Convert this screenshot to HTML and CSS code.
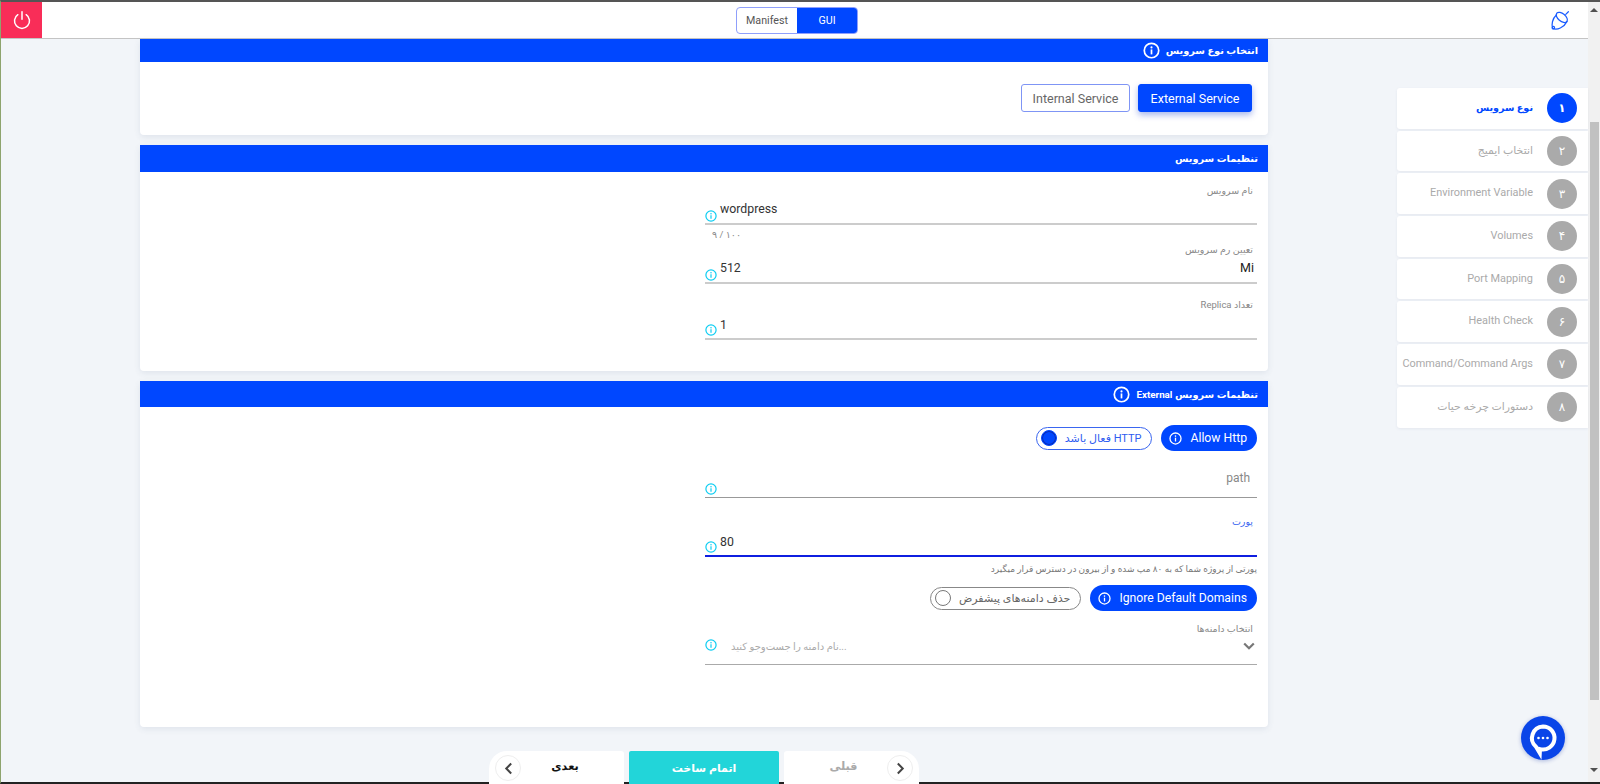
FILE: index.html
```html
<!DOCTYPE html>
<html lang="fa">
<head>
<meta charset="utf-8">
<title>Service</title>
<link rel="stylesheet" href="styles.css">
</head>
<body>
<svg class="defs" width="0" height="0" aria-hidden="true">
  <symbol id="info" viewBox="0 0 24 24">
    <circle cx="12" cy="12" r="10.2" fill="none" stroke="currentColor" stroke-width="2.4"/>
    <rect x="10.8" y="10.5" width="2.4" height="7" fill="currentColor"/>
    <circle cx="12" cy="7.6" r="1.5" fill="currentColor"/>
  </symbol>
</svg>
<div class="frame">
  <div class="page">
    <header class="topbar">
      <button class="power" aria-label="power">
        <svg viewBox="0 0 24 24" width="20" height="20"><path d="M7 5.6a9 9 0 1 0 10 0" fill="none" stroke="#fff" stroke-width="1.8" stroke-linecap="round"/><path d="M12 2v9" fill="none" stroke="#fff" stroke-width="1.8" stroke-linecap="round"/></svg>
      </button>
      <div class="switch">
        <span class="switch-item">Manifest</span>
        <span class="switch-item switch-on">GUI</span>
      </div>
      <svg class="logo" viewBox="0 0 24 24" width="21" height="21">
        <g fill="none" stroke="#1a5cff" stroke-width="1.400" stroke-linejoin="round" stroke-linecap="round">
          <ellipse cx="13.500" cy="8.500" rx="7.500" ry="4.300" transform="rotate(40 13.500 8.500)"/>
          <path d="M7.500 5.500C2.500 10 1.500 17 3 21c5 2.500 13-1 16.500-8"/>
          <path d="M18 5 21 2"/>
          <circle cx="3.800" cy="20.200" r="1.400"/>
        </g>
      </svg>
    </header>
    <div class="workspace">
      <main class="main">
        <section class="card">
          <h2 class="card-head card-head-first">انتخاب نوع سرویس <svg class="head-info"><use href="#info"/></svg></h2>
          <div class="card-body type-body">
            <button class="type-btn type-on">External Service</button>
            <button class="type-btn">Internal Service</button>
          </div>
        </section>
        <section class="card">
          <h2 class="card-head card-head-tall">تنظیمات سرویس</h2>
          <div class="card-body form-body settings-body">
            <div class="field">
              <div class="field-label">نام سرویس</div>
              <div class="field-row"><svg class="info"><use href="#info"/></svg><span class="value">wordpress</span></div>
              <div class="counter">۹ / ۱۰۰</div>
            </div>
            <div class="field field-ram">
              <div class="field-label">تعیین رم سرویس</div>
              <div class="field-row"><svg class="info"><use href="#info"/></svg><span class="value">512</span><span class="suffix">Mi</span></div>
            </div>
            <div class="field field-replica">
              <div class="field-label">تعداد Replica</div>
              <div class="field-row field-row-low"><svg class="info"><use href="#info"/></svg><span class="value">1</span></div>
            </div>
          </div>
        </section>
        <section class="card">
          <h2 class="card-head">تنظیمات سرویس External <svg class="head-info"><use href="#info"/></svg></h2>
          <div class="card-body form-body external-body">
            <div class="pill-row">
              <div class="toggle toggle-on"><span class="knob"></span><span dir="rtl">HTTP فعال باشد</span></div>
              <div class="pill"><svg class="pill-info"><use href="#info"/></svg><span>Allow Http</span></div>
            </div>
            <div class="field field-path">
              <div class="field-row field-row-dark"><svg class="info"><use href="#info"/></svg><span class="value"></span><span class="placeholder">path</span></div>
            </div>
            <div class="field field-port">
              <div class="field-label field-label-blue">پورت</div>
              <div class="field-row field-row-blue field-row-low"><svg class="info"><use href="#info"/></svg><span class="value">80</span></div>
              <div class="hint">پورتی از پروژه شما که به ۸۰ مپ شده و از بیرون در دسترس قرار میگیرد</div>
            </div>
            <div class="pill-row pill-row-second">
              <div class="toggle"><span class="knob"></span><span dir="rtl">حذف دامنه‌های پیشفرض</span></div>
              <div class="pill"><svg class="pill-info"><use href="#info"/></svg><span>Ignore Default Domains</span></div>
            </div>
            <div class="field field-domains">
              <div class="field-label">انتخاب دامنه‌ها</div>
              <div class="select-row">
                <svg class="info"><use href="#info"/></svg>
                <span class="select-placeholder" dir="rtl">...نام دامنه را جست‌وجو کنید</span>
                <svg class="chevron" viewBox="0 0 12 8" width="12" height="8"><path d="M1.200 1.500 6 6.200l4.800-4.700" fill="none" stroke="#777" stroke-width="2.200"/></svg>
              </div>
            </div>
          </div>
        </section>
        <nav class="wizard">
          <button class="wiz wiz-next"><span class="wiz-circle"><svg viewBox="0 0 10 14" width="9" height="13"><path d="M8 1.500 2.500 7 8 12.500" fill="none" stroke="#444" stroke-width="2.200"/></svg></span><span class="wiz-text">بعدی</span></button>
          <button class="wiz-finish">اتمام ساخت</button>
          <button class="wiz wiz-prev"><span class="wiz-text">قبلی</span><span class="wiz-circle"><svg viewBox="0 0 10 14" width="9" height="13"><path d="M2 1.500 7.500 7 2 12.500" fill="none" stroke="#444" stroke-width="2.200"/></svg></span></button>
        </nav>
      </main>
      <aside class="steps">
        <div class="step step-on"><span class="step-text">نوع سرویس</span><span class="step-num">۱</span></div>
        <div class="step"><span class="step-text">انتخاب ایمیج</span><span class="step-num">۲</span></div>
        <div class="step"><span class="step-text">Environment Variable</span><span class="step-num">۳</span></div>
        <div class="step"><span class="step-text">Volumes</span><span class="step-num">۴</span></div>
        <div class="step"><span class="step-text">Port Mapping</span><span class="step-num">۵</span></div>
        <div class="step"><span class="step-text">Health Check</span><span class="step-num">۶</span></div>
        <div class="step"><span class="step-text">Command/Command Args</span><span class="step-num">۷</span></div>
        <div class="step"><span class="step-text">دستورات چرخه حیات</span><span class="step-num">۸</span></div>
      </aside>
    </div>
    <button class="chat" aria-label="chat">
      <svg viewBox="0 0 44 44" width="44" height="44"><path d="M22 10.500a11.500 11.500 0 1 1-3 22.600l-.2 3.900-3.800-6.300A11.500 11.500 0 0 1 22 10.500z" fill="none" stroke="#fff" stroke-width="4"/><circle cx="17.500" cy="22" r="1.300" fill="#fff"/><circle cx="22" cy="22" r="1.300" fill="#fff"/><circle cx="26.500" cy="22" r="1.300" fill="#fff"/></svg>
    </button>
  </div>
  <div class="scrollbar">
    <span class="arrow-up"></span>
    <span class="thumb"></span>
    <span class="arrow-down"></span>
  </div>
</div>
</body>
</html>
```
FILE: styles.css
```css
* { box-sizing: border-box; }
html, body { margin: 0; height: 784px; overflow: hidden; }
body { font-family: Roboto, "DejaVu Sans", sans-serif; background: #f2f5f9; color: #333; }
button { font-family: inherit; border: 0; padding: 0; background: none; }
.defs { position: absolute; }

.frame { display: flex; height: 784px; border-top: 2px solid #555; border-bottom: 2px solid #222; border-left: 1px solid #8ea46e; }
.page { position: relative; flex: 1; min-width: 0; }

.topbar { display: flex; align-items: center; height: 37px; background: #fff; border-bottom: 1px solid #c4c4c4; }
.power { display: flex; flex: none; align-items: center; justify-content: center; width: 41px; height: 36px; background: #f92d58; }
.switch { display: flex; width: 122px; height: 27px; margin-left: 694px; border: 1px solid #8f9ffb; border-radius: 4px; overflow: hidden; font-size: 10.700px; }
.switch-item { display: flex; flex: 1; align-items: center; justify-content: center; color: #555; }
.switch-on { background: #0047ff; color: #fff; }
.logo { margin-left: auto; margin-right: 17px; }

.workspace { display: flex; align-items: flex-start; }
.main { width: 1128px; margin-left: 139px; }
.card { margin-bottom: 10px; background: #fff; border-radius: 0 0 4px 4px; box-shadow: 0 2px 6px rgba(60, 80, 120, .1); }
.card-head { display: flex; align-items: center; justify-content: flex-start; gap: 6px; height: 26px; margin: 0; padding: 0 10px; background: #0047ff; color: #fff; font-size: 9.800px; font-weight: 700; direction: rtl; }
.card-head-first { height: 23px; }
.card-head-tall { height: 27px; }
.head-info { width: 17px; height: 17px; color: #fff; }

.type-body { display: flex; flex-direction: row-reverse; gap: 8px; height: 73px; padding: 22px 16px 0; }
.type-btn { width: 109px; height: 28px; border: 1px solid #7f95f5; border-radius: 3px; background: #fff; color: #666; font-size: 12.500px; }
.type-on { width: 114px; border-color: #0047ff; background: #0047ff; color: #fff; box-shadow: 0 3px 6px rgba(0, 50, 200, .35); }

.form-body { padding-left: 565px; padding-right: 11px; }
.settings-body { padding-top: 12px; height: 199px; }
.external-body { padding-top: 18px; height: 320px; }

.field-label { height: 14px; padding-right: 4px; color: #888; font-size: 9.500px; line-height: 14px; direction: rtl; }
.field-label-blue { color: #3a66f0; }
.field-row { display: flex; align-items: flex-start; height: 27px; border-bottom: 2px solid #ccc; }
.field-row-low { height: 28px; }
.field-row-low .value { padding-top: 2px; }
.field-row-dark { border-bottom: 1px solid #999; }
.field-row-blue { border-bottom: 2px solid #0f1fe0; }
.info { flex: none; width: 12px; height: 12px; margin-top: 12px; color: #0ccdf2; }
.value { flex: 1; padding-left: 3px; color: #333; font-size: 12.300px; line-height: 22px; }
.suffix { padding-right: 3px; color: #222; font-size: 12.500px; line-height: 22px; }
.placeholder { padding-right: 7px; color: #888; font-size: 12px; line-height: 15px; }
.counter { height: 16px; padding: 4px 0 0 7px; color: #888; font-size: 9.500px; line-height: 12px; }
.field-ram { margin-top: 2px; }
.field-replica { margin-top: 14px; }
.field-path { margin-top: 20px; }
.field-port { margin-top: 17px; }
.field-domains { margin-top: 11px; }
.hint { height: 17px; padding: 7px 0 0; color: #777; font-size: 9px; line-height: 10px; direction: rtl; }

.pill-row { display: flex; align-items: center; justify-content: flex-end; gap: 9px; }
.pill-row-second { margin-top: 11px; }
.pill { display: flex; align-items: center; gap: 8px; height: 26px; padding: 0 10px 0 8px; border-radius: 13px; background: #0047ff; color: #fff; font-size: 12.200px; }
.pill-info { width: 13px; height: 13px; color: #fff; }
.toggle { display: flex; align-items: center; gap: 8px; height: 23px; padding: 0 10px 0 4px; border: 1px solid #888; border-radius: 12px; color: #666; font-size: 11px; }
.toggle-on { border-color: #3a66f0; color: #2f5cf0; }
.knob { flex: none; width: 16px; height: 16px; border: 1px solid #777; border-radius: 50%; background: #fff; }
.toggle-on .knob { border-color: #0047ff; background: #0047ff; box-shadow: inset 0 0 0 1px #0a2ab0; }

.select-row { display: flex; align-items: flex-start; height: 29px; border-bottom: 1px solid #aaa; }
.select-row .info { margin-top: 3px; }
.select-placeholder { flex: none; margin: 4px 0 0 14px; color: #aaa; font-size: 10px; line-height: 14px; }
.chevron { margin: 6px 2px 0 auto; }

.wizard { display: flex; width: 430px; height: 42px; margin: 24px 0 0 349px; gap: 5px; }
.wiz { display: flex; flex: none; align-items: flex-start; width: 135px; height: 42px; padding-top: 4px; background: #fff; font-size: 11.300px; font-weight: 700; }
.wiz-next { border-radius: 18px 3px 0 0; padding-left: 6px; padding-right: 15px; color: #111; }
.wiz-prev { border-radius: 3px 18px 0 0; padding-left: 16px; padding-right: 6px; color: #aaa; justify-content: flex-end; }
.wiz-circle { display: flex; flex: none; align-items: center; justify-content: center; width: 26px; height: 26px; border: 1px solid #eee; border-radius: 50%; background: #fff; }
.wiz-text { flex: 1; text-align: center; line-height: 24px; }
.wiz-finish { width: 150px; height: 42px; padding-bottom: 8px; border-radius: 2px 2px 0 0; background: #22d5d9; color: #fff; font-size: 11px; font-weight: 700; }

.steps { display: flex; flex-direction: column; gap: 2px; width: 191px; margin: 49px 0 0 129px; }
.step { display: flex; align-items: center; justify-content: flex-end; gap: 14px; height: 40.700px; padding-right: 11px; border-radius: 3px 0 0 3px; background: #fff; color: #aaa; font-size: 10.900px; white-space: nowrap; box-shadow: 0 1px 3px rgba(60, 80, 120, .08); }
.step-text { margin-top: -2px; }
.step-num { display: flex; flex: none; align-items: center; justify-content: center; width: 30px; height: 30px; border-radius: 50%; background: #aaa; color: #fff; font-size: 12px; }
.step-on { color: #0047ff; font-size: 9.600px; font-weight: 700; }
.step-on .step-num { background: #0047ff; }

.chat { position: absolute; left: 1520px; top: 714px; width: 44px; height: 44px; border-radius: 50%; background: #0a45e8; box-shadow: 0 1px 4px rgba(0, 40, 160, .3); }

.scrollbar { display: flex; flex: none; flex-direction: column; align-items: center; width: 12px; padding: 6px 0 0; background: #f1f1f1; }
.thumb { width: 9px; height: 578px; margin-top: 110px; background: #c1c1c1; }
.arrow-up { width: 0; height: 0; border: 4px solid transparent; border-top: 0; border-bottom: 4px solid #505050; }
.arrow-down { width: 0; height: 0; margin-top: 68px; border: 4px solid transparent; border-bottom: 0; border-top: 4px solid #505050; }
```
